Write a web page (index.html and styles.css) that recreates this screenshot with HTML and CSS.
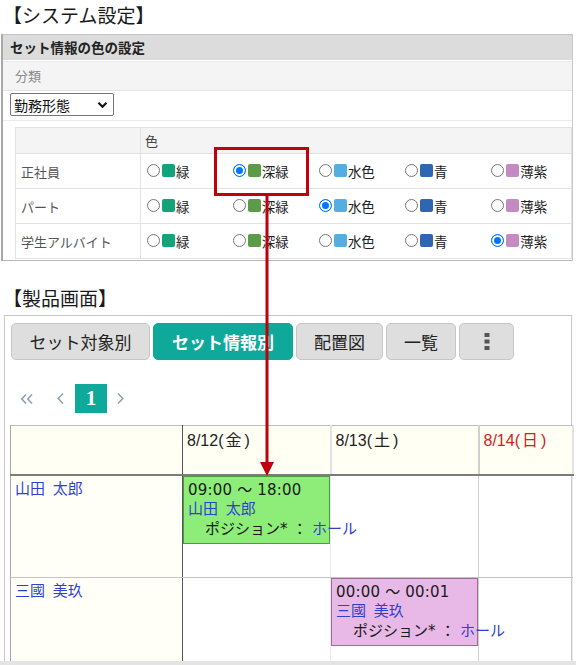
FILE: index.html
```html
<!DOCTYPE html>
<html lang="ja">
<head>
<meta charset="utf-8">
<title>設定</title>
<link rel="stylesheet" href="styles.css">
</head>
<body>
<div class="title">【システム設定】</div>
<section class="settings">
  <div class="s-head">セット情報の色の設定</div>
  <div class="s-label">分類</div>
  <div class="s-select-row">
    <div class="select"><span>勤務形態</span><svg class="chev" width="11" height="8" viewBox="0 0 11 8"><path d="M1.5 1.8 L5.5 5.8 L9.5 1.8" fill="none" stroke="#111" stroke-width="2.2"/></svg></div>
  </div>
  <table class="colors">
    <tr class="c-head"><th class="rh"></th><th colspan="5" class="ch">色</th></tr>
    <tr>
      <td class="rh">正社員</td>
      <td><span class="opt"><i class="radio"></i><i class="sw g1"></i>緑</span></td>
      <td><span class="opt"><i class="radio on"></i><i class="sw g2"></i>深緑</span></td>
      <td><span class="opt"><i class="radio"></i><i class="sw g3"></i>水色</span></td>
      <td><span class="opt"><i class="radio"></i><i class="sw g4"></i>青</span></td>
      <td class="last"><span class="opt"><i class="radio"></i><i class="sw g5"></i>薄紫</span></td>
    </tr>
    <tr>
      <td class="rh">パート</td>
      <td><span class="opt"><i class="radio"></i><i class="sw g1"></i>緑</span></td>
      <td><span class="opt"><i class="radio"></i><i class="sw g2"></i>深緑</span></td>
      <td><span class="opt"><i class="radio on"></i><i class="sw g3"></i>水色</span></td>
      <td><span class="opt"><i class="radio"></i><i class="sw g4"></i>青</span></td>
      <td class="last"><span class="opt"><i class="radio"></i><i class="sw g5"></i>薄紫</span></td>
    </tr>
    <tr>
      <td class="rh">学生アルバイト</td>
      <td><span class="opt"><i class="radio"></i><i class="sw g1"></i>緑</span></td>
      <td><span class="opt"><i class="radio"></i><i class="sw g2"></i>深緑</span></td>
      <td><span class="opt"><i class="radio"></i><i class="sw g3"></i>水色</span></td>
      <td><span class="opt"><i class="radio"></i><i class="sw g4"></i>青</span></td>
      <td class="last"><span class="opt"><i class="radio on"></i><i class="sw g5"></i>薄紫</span></td>
    </tr>
  </table>
</section>

<div class="title title2">【製品画面】</div>
<section class="product">
  <div class="tabs">
    <div class="tab w1">セット対象別</div>
    <div class="tab w2 active">セット情報別</div>
    <div class="tab w3">配置図</div>
    <div class="tab w4">一覧</div>
    <div class="tab w5"><svg width="6" height="17" viewBox="0 0 6 17"><rect x="0.5" y="0" width="5" height="4" fill="#555"/><rect x="0.5" y="6.5" width="5" height="4" fill="#555"/><rect x="0.5" y="13" width="5" height="4" fill="#555"/></svg></div>
  </div>
  <div class="pager">
    <svg class="pg-first" width="14" height="12" viewBox="0 0 14 12"><path d="M6 1.5 L1.8 6 L6 10.5 M12 1.5 L7.8 6 L12 10.5" fill="none" stroke="#8fa0b2" stroke-width="1.6"/></svg>
    <svg class="pg-prev" width="9" height="13" viewBox="0 0 9 13"><path d="M7 1.5 L2.2 6.5 L7 11.5" fill="none" stroke="#8fa0b2" stroke-width="1.6"/></svg>
    <span class="page">1</span>
    <svg class="pg-next" width="9" height="13" viewBox="0 0 9 13"><path d="M2 1.5 L6.8 6.5 L2 11.5" fill="none" stroke="#8fa0b2" stroke-width="1.6"/></svg>
  </div>
  <table class="cal">
    <colgroup><col class="k1"><col class="k2"><col class="k3"><col class="k4"></colgroup>
    <tr class="hd">
      <th class="c1"></th>
      <th>8/12(<span class="wd">金</span>)</th>
      <th class="sep2">8/13(<span class="wd">土</span>)</th>
      <th class="sun">8/14(<span class="wd">日</span>)</th>
    </tr>
    <tr class="r1">
      <td class="c1"><a class="name">山田 太郎</a></td>
      <td><div class="shift green"><div class="time">09:00 ～ 18:00</div><div class="who">山田 太郎</div><div class="pos">ポジション*&nbsp;：&nbsp;<span class="lnk">ホール</span></div></div></td>
      <td class="sep2"></td>
      <td></td>
    </tr>
    <tr class="r2">
      <td class="c1"><a class="name">三國 美玖</a></td>
      <td></td>
      <td class="sep2"><div class="shift purple"><div class="time">00:00 ～ 00:01</div><div class="who">三國 美玖</div><div class="pos">ポジション*&nbsp;：&nbsp;<span class="lnk">ホール</span></div></div></td>
      <td></td>
    </tr>
  </table>
</section>
<div class="strip"></div>

<svg class="overlay" width="576" height="666" viewBox="0 0 576 666">
  <rect x="215.5" y="148.5" width="92" height="46" fill="none" stroke="#c0000c" stroke-width="3"/>
  <line x1="267" y1="196" x2="267" y2="464" stroke="#c0000c" stroke-width="3"/>
  <polygon points="260,462 274,462 267,476" fill="#c0000c"/>
</svg>
</body>
</html>
```

FILE: styles.css
```css
* { box-sizing: border-box; }
html, body { margin: 0; padding: 0; }
body {
  width: 576px;
  height: 666px;
  overflow: hidden;
  position: relative;
  background: #fff;
  color: #222;
  font-family: "Noto Sans CJK JP", "Noto Sans", sans-serif;
}

.title {
  height: 34px;
  padding: 2px 0 0 3px;
  font-size: 19px;
  line-height: 26px;
  color: #1a1a1a;
}

/* ---------- settings panel ---------- */
.settings {
  margin-left: 1px;
  width: 572px;
  border-top: 1px solid #c4c4c4;
  border-right: 1px solid #c8c8c8;
  border-left: 2px solid #a9a9a9;
  border-bottom: 1px solid #b8b8b8;
  padding-bottom: 1px;
}
.s-head {
  height: 25px;
  background: #dcdcdc;
  font-size: 13.5px;
  font-weight: 700;
  line-height: 25px;
  padding-left: 7px;
  color: #222;
}
.s-label {
  margin-top: 1px;
  height: 30px;
  background: #f4f4f4;
  border-top: 1px solid #ebebeb;
  border-bottom: 1px solid #e4e4e4;
  padding-left: 12px;
  font-size: 13px;
  line-height: 28px;
  color: #888;
}
.s-select-row {
  height: 30px;
  border-bottom: 1px solid #ececec;
  padding: 2px 0 0 7px;
}
.select {
  width: 104px;
  height: 23px;
  border: 1px solid #767676;
  border-radius: 2px;
  display: flex;
  align-items: center;
  justify-content: space-between;
  padding: 0 5px 0 3px;
  font-size: 14px;
  color: #111;
  background: #fff;
}
.chev { display: block; }

.colors {
  margin: 6px 0 0 12px;
  width: 557px;
  border-collapse: collapse;
  table-layout: fixed;
  font-size: 13px;
  border: 1px solid #e2e2e2;
}
.colors th, .colors td {
  border-top: 1px solid #e2e2e2;
  border-bottom: 1px solid #e2e2e2;
  padding: 0;
  text-align: left;
  font-weight: 400;
}
.colors .rh { border-right: 1px solid #e2e2e2; }
.colors .last { border-right: 1px solid #e2e2e2; }
.colors .c-head th {
  height: 26px;
  background: #f4f4f4;
  color: #444;
}
.colors .ch { padding-left: 4px; border-right: 1px solid #e2e2e2; }
.colors th.rh, .colors td.rh { width: 125px; }
.colors td { height: 35px; }
.colors td.rh {
  padding-left: 5px;
  color: #555;
}
.colors td:not(.rh) { padding-left: 6px; }
.opt {
  display: inline-flex;
  align-items: center;
  font-size: 13.5px;
  color: #222;
  white-space: nowrap;
}
.radio {
  display: inline-block;
  width: 13px;
  height: 13px;
  border: 1px solid #767676;
  border-radius: 50%;
  background: #fff;
  margin-right: 2px;
}
.radio.on {
  border-color: #0075ff;
  background: #0075ff;
  box-shadow: inset 0 0 0 2px #fff;
}
.sw {
  display: inline-block;
  width: 13px;
  height: 13px;
  border-radius: 2px;
  margin-right: 1px;
}
.g1 { background: #12a37b; }
.g2 { background: #5c9b48; }
.g3 { background: #56aee0; }
.g4 { background: #2e66b2; }
.g5 { background: #c38bc2; }

/* ---------- product screen ---------- */
.title2 {
  height: 54px;
  padding-top: 24px;
  padding-left: 3px;
}
.product {
  margin-left: 4px;
  width: 568px;
  border: 1px solid #c8c8c8;
  border-bottom: none;
  padding-top: 7px;
}
.tabs {
  display: flex;
  gap: 3px;
  padding-left: 6px;
}
.tab {
  height: 37px;
  border: 1px solid #c6c6c6;
  border-radius: 5px;
  background: #dedede;
  display: flex;
  align-items: center;
  justify-content: center;
  font-size: 17px;
  color: #222;
}
.tab.active {
  background: #0ea99b;
  border-color: #0ea99b;
  color: #fff;
  font-weight: 700;
}
.w1 { width: 139px; }
.w2 { width: 140px; }
.w3 { width: 87px; }
.w4 { width: 70px; }
.w5 { width: 55px; }
.w5 svg { display: block; }

.pager {
  margin-top: 24px;
  height: 29px;
  display: flex;
  align-items: center;
}
.pager svg { display: block; }
.pg-first { margin-left: 15px; }
.pg-prev { margin-left: 22px; }
.page {
  margin-left: 10px;
  width: 32px;
  height: 29px;
  background: #0ea99b;
  color: #fff;
  font-family: "Liberation Serif", serif;
  font-weight: 700;
  font-size: 21px;
  line-height: 29px;
  text-align: center;
}
.pg-next { margin-left: 9px; }

.cal {
  margin: 12px 0 0 5px;
  width: 562px;
  border-collapse: collapse;
  table-layout: fixed;
  font-family: "DejaVu Sans", "Noto Sans CJK JP", sans-serif;
  font-size: 15px;
  line-height: 19px;
}
.k1 { width: 172px; }
.k2 { width: 148px; }
.k3 { width: 148px; }
.k4 { width: 94px; }
.cal th, .cal td {
  padding: 0;
  vertical-align: top;
  text-align: left;
  font-weight: 400;
  border-right: 1px solid #ebebeb;
}
.cal .hd th {
  height: 49px;
  background: #fffff3;
  border-top: 1px solid #bdbdbd;
  border-bottom: 2px solid #7c7c7c;
  border-right: 2px solid #e2e2e2;
  padding: 5px 0 0 4px;
  font-family: "Liberation Sans", "Noto Sans CJK JP", sans-serif;
  font-size: 16px;
  color: #222;
}
.cal td.sep2 { border-right: 1px solid #cfcfcf; }
.cal .hd th.sep2 { border-right: 2px solid #d0d0d0; }
.cal .hd th.sun { color: #d42020; }
.wd { padding: 0 3px 0 2px; }
.cal .c1 {
  background: #fffff8;
  border-left: 1px solid #a8a8a8;
}
.cal th.c1, .cal td.c1 { border-right: 1px solid #555; }
.cal td.c1 { padding: 4px 0 0 4px; }
.cal .r1 td { height: 103px; border-bottom: 1px solid #c4c4c4; }
.cal .r2 td { height: 83px; }
.name, .who, .lnk { color: #2f3fd0; }
.name, .who { word-spacing: 3px; }

.shift {
  height: 68px;
  border: 1px solid;
  padding: 4px 0 0 4px;
  white-space: nowrap;
  color: #1a1a1a;
}
.shift.green { background: #8ded78; border-color: #4e9a3e; }
.shift.purple { background: #e8b9e6; border-color: #9c6b9a; }
.time { letter-spacing: 0.2px; }
.pos { padding-left: 17px; padding-top: 1px; }

.strip {
  height: 4px;
  background: #e4e4e4;
}

.overlay {
  position: absolute;
  left: 0;
  top: 0;
  pointer-events: none;
}
```
